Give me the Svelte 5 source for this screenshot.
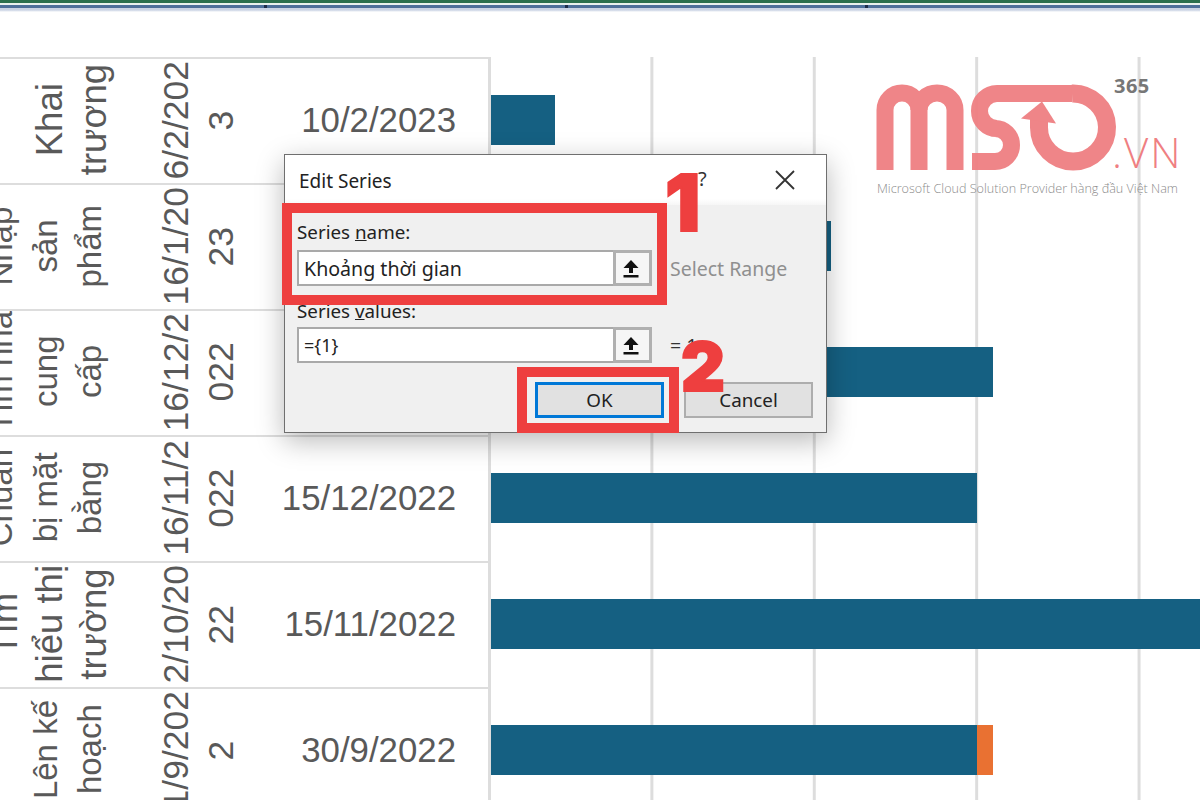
<script>
  const rows = [
    { name: ['', 'Khai', 'trương'], start: ['6/2/202', '3'], end: '10/2/2023', large: true, bars: [{ w: 64 }] },
    { name: ['Nhập', 'sản', 'phẩm'], start: ['16/1/20', '23'], end: '', bars: [{ w: 340 }] },
    { name: ['Tìm nhà', 'cung', 'cấp'], start: ['16/12/2', '022'], end: '', bars: [{ w: 502 }] },
    { name: ['Chuẩn', 'bị mặt', 'bằng'], start: ['16/11/2', '022'], end: '15/12/2022', bars: [{ w: 486 }] },
    { name: ['Tìm', 'hiểu thị', 'trường'], start: ['2/10/20', '22'], end: '15/11/2022', large: true, bars: [{ w: 720 }] },
    { name: ['', 'Lên kế', 'hoạch'], start: ['1/9/202', '2'], end: '30/9/2022', bars: [{ w: 486 }, { w: 16, orange: true }] }
  ];
</script>

<div class="page">
  <div class="topbar">
    <i class="tick t1"></i>
    <i class="tick t2"></i>
    <i class="tick t3"></i>
  </div>

  <div class="sheet">
    <div class="table">
      {#each rows as row}
        <div class="row">
          <div class="name" class:large={row.large}>
            <div class="vert">
              {#each row.name as line}
                <span class="ln">{line || '\u00a0'}</span>
              {/each}
            </div>
          </div>
          <div class="start">
            <div class="vert">
              {#each row.start as line}
                <span class="ln">{line}</span>
              {/each}
            </div>
          </div>
          <div class="end">{row.end}</div>
        </div>
      {/each}
    </div>

    <div class="chart">
      {#each rows as row}
        <div class="lane">
          {#each row.bars as bar}
            <div class="bar" class:orange={bar.orange} style="width: {bar.w}px"></div>
          {/each}
        </div>
      {/each}
    </div>
  </div>

  <div class="logo">
    <svg width="250" height="100" viewBox="870 80 250 100" fill="none">
      <g stroke="#ef7f82" stroke-width="17">
        <path d="M885 170V110a17 17 0 0 1 34 0V170" />
        <path d="M919 110a18 17 0 0 1 36 0V170" />
        <path d="M972 161.500H995a16.500 16.500 0 0 0 0-33H997a17.500 17.500 0 0 1 0-35H1072" />
        <path d="M1072 93.500a34 34 0 1 1-33 34V116" stroke-width="18" />
      </g>
      <polygon points="1042,101.500 1056,123.500 1021,118.500" fill="#ef7f82" />
    </svg>
    <span class="l365">365</span>
    <span class="lvn">.VN</span>
    <span class="ltag">Microsoft Cloud Solution Provider hàng đầu Việt Nam</span>
  </div>

  <div class="dialog">
    <div class="titlebar">
      <span class="title">Edit Series</span>
      <span class="help">?</span>
      <svg class="close" width="20" height="20" viewBox="0 0 20 20">
        <path d="M1 1L19 19M19 1L1 19" stroke="#333" stroke-width="1.800" fill="none" />
      </svg>
    </div>
    <div class="body">
      <div class="label">Series <u>n</u>ame:</div>
      <div class="fieldrow">
        <div class="field">Khoảng thời gian</div>
        <div class="pick">
          <svg width="16" height="19" viewBox="0 0 16 19">
            <path d="M8 1L15.500 9H10V14H6V9H0.500Z" fill="#111" />
            <rect x="0.500" y="16" width="15" height="2.500" fill="#111" />
          </svg>
        </div>
        <span class="note">Select Range</span>
      </div>
      <div class="label second">Series <u>v</u>alues:</div>
      <div class="fieldrow">
        <div class="field small">={'{'}1{'}'}</div>
        <div class="pick">
          <svg width="16" height="19" viewBox="0 0 16 19">
            <path d="M8 1L15.500 9H10V14H6V9H0.500Z" fill="#111" />
            <rect x="0.500" y="16" width="15" height="2.500" fill="#111" />
          </svg>
        </div>
        <span class="note dark">= 1</span>
      </div>
      <div class="buttons">
        <button class="ok">OK</button>
        <button>Cancel</button>
      </div>
    </div>
    <div class="mark box1"></div>
    <div class="mark box2"></div>
    <span class="num n1">1</span>
    <span class="num n2">2</span>
  </div>
</div>

<style>
  :global(body) {
    margin: 0;
    background: #fff;
  }

  .page {
    position: relative;
    width: 1200px;
    height: 800px;
    overflow: hidden;
    background: #fff;
    font-family: "Liberation Sans", Arial, sans-serif;
  }

  .topbar {
    position: relative;
    height: 12px;
    margin-bottom: 45px;
    background: linear-gradient(to bottom, #2a6f4e 0 3px, #e9f0ee 3px 5px, #4d6f9b 5px 8px, #c9d2e4 8px 10px, #fff 12px);
  }

  .tick {
    position: absolute;
    top: 5px;
    width: 3px;
    height: 3px;
    background: #1c2c4a;
  }
  .t1 { left: 264px; }
  .t2 { left: 565px; }
  .t3 { left: 865px; }

  .sheet {
    display: flex;
    height: 743px;
  }

  .table {
    width: 488px;
    flex: none;
    border-right: 2px solid #ddd;
    color: #595959;
  }

  .row {
    display: flex;
    height: 124px;
    border-top: 2px solid #ddd;
    overflow: hidden;
    font-size: 34.800px;
  }

  .vert {
    writing-mode: vertical-rl;
    transform: rotate(180deg);
    line-height: 44.500px;
    text-align: center;
    white-space: nowrap;
  }

  .ln {
    display: block;
  }

  .name {
    width: 112px;
    flex: none;
    display: flex;
    justify-content: flex-end;
    align-items: center;
    height: 122px;
    overflow: hidden;
    font-size: 33px;
  }
  .name.large {
    width: 116px;
    font-size: 36.500px;
  }

  .start {
    flex: 1;
    display: flex;
    justify-content: flex-end;
    align-items: center;
    height: 122px;
    overflow: hidden;
    font-size: 35.500px;
  }

  .end {
    width: 245px;
    height: 122px;
    flex: none;
    box-sizing: border-box;
    padding-right: 32px;
    display: flex;
    align-items: center;
    justify-content: flex-end;
  }

  .chart {
    flex: 1;
    background-image: linear-gradient(to right, #ddd 3px, transparent 3px);
    background-size: 162.400px 100%;
    background-position: -2px 0;
  }

  .lane {
    display: flex;
    align-items: center;
    height: 126px;
    margin-left: 1px;
  }

  .bar {
    height: 50px;
    flex: none;
    background: #156082;
  }
  .bar.orange {
    background: #e97132;
  }

  .logo {
    position: absolute;
    left: 870px;
    top: 80px;
    width: 330px;
    height: 120px;
  }
  .logo svg {
    display: block;
    opacity: 0.95;
  }
  .l365 {
    position: absolute;
    left: 244px;
    top: -8px;
    font: 700 20px "Open Sans", sans-serif;
    letter-spacing: 0.500px;
    color: #777;
  }
  .lvn {
    position: absolute;
    left: 242px;
    top: 44px;
    font: 300 42px "Open Sans", sans-serif;
    letter-spacing: 2px;
    color: #ef7f82;
    line-height: 56px;
  }
  .ltag {
    position: absolute;
    left: 7px;
    top: 100px;
    font: 300 12.600px "Open Sans", sans-serif;
    color: #8c8c8c;
    white-space: nowrap;
  }

  .dialog {
    position: absolute;
    left: 284px;
    top: 154px;
    width: 541px;
    height: 277px;
    border: 1px solid #6f6f6f;
    background: #f0f0f0;
    box-shadow: 0 8px 26px rgba(0, 0, 0, 0.28);
    font-family: "Noto Sans", "Open Sans", sans-serif;
    color: #222;
    font-size: 18.800px;
  }

  .titlebar {
    position: relative;
    height: 50px;
    background: linear-gradient(to bottom, #fff 44px, #f0f0f0 54px);
    display: flex;
    align-items: center;
    padding-left: 14px;
    padding-top: 2px;
    box-sizing: border-box;
  }
  .title {
    font-size: 19px;
    color: #222;
  }
  .help {
    position: absolute;
    left: 413px;
    top: 10px;
    font-size: 20px;
    color: #333;
  }
  .close {
    position: absolute;
    left: 490px;
    top: 15px;
  }

  .body {
    padding: 0 12px;
  }

  .label {
    height: 45px;
    display: flex;
    align-items: flex-end;
    line-height: 26px;
    padding-bottom: 5px;
    box-sizing: border-box;
    white-space: pre;
  }
  .label.second {
    height: 41px;
    padding-bottom: 3px;
  }

  .fieldrow {
    display: flex;
    align-items: center;
    height: 36px;
  }

  .field {
    width: 316px;
    height: 36px;
    box-sizing: border-box;
    border: 2px solid #a9a9a9;
    border-right: none;
    background: #fff;
    padding-left: 5px;
    line-height: 33px;
    font-size: 19.600px;
  }
  .field.small {
    font-size: 18px;
  }

  .pick {
    width: 39px;
    height: 36px;
    box-sizing: border-box;
    border: 3px solid #b0b0b0;
    background: #f6f6f6;
    display: flex;
    align-items: center;
    justify-content: center;
    padding-right: 4px;
  }

  .note {
    margin-left: 18px;
    color: #8f8f8f;
    font-size: 19.500px;
  }
  .note.dark {
    color: #333;
  }

  .buttons {
    display: flex;
    justify-content: flex-end;
    gap: 20px;
    margin-top: 19px;
    padding-right: 1px;
  }

  button {
    width: 129px;
    height: 36px;
    box-sizing: border-box;
    border: 2px solid #adadad;
    background: #e1e1e1;
    font: inherit;
    color: #222;
    padding: 0;
  }
  button.ok {
    border: 3px solid #0078d7;
  }

  .mark {
    position: absolute;
    box-sizing: border-box;
    border: 10px solid #ee3f3f;
  }
  .box1 {
    left: -3px;
    top: 48px;
    width: 385px;
    height: 102px;
  }
  .box2 {
    left: 232px;
    top: 212px;
    width: 162px;
    height: 66px;
  }

  .num {
    position: absolute;
    font-family: Inter, sans-serif;
    font-weight: 900;
    color: #ee3f3f;
    line-height: 1;
    -webkit-text-stroke: 2px #ee3f3f;
  }
  .n1 {
    left: 380px;
    top: 9px;
    font-size: 78px;
  }
  .n2 {
    left: 396px;
    top: 177px;
    font-size: 68px;
  }
</style>
